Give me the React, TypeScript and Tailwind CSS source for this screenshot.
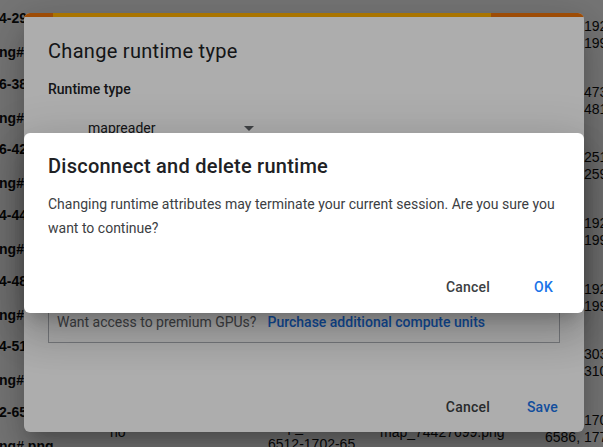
import { useState } from "react";

const rows = [
  { tail: "4-29", no: "no", id: "6512-1702-65...", map: "map_74427623.png", c1: "6512, 1920,", c2: "6586, 1994)" },
  { tail: "6-38", no: "no", id: "6512-1702-65...", map: "map_74427638.png", c1: "6512, 4733,", c2: "6586, 4810)" },
  { tail: "6-42", no: "no", id: "6512-1702-65...", map: "map_74427642.png", c1: "6512, 2517,", c2: "6586, 2591)" },
  { tail: "4-44", no: "no", id: "6512-1702-65...", map: "map_74427644.png", c1: "6512, 1920,", c2: "6586, 1994)" },
  { tail: "4-48", no: "no", id: "6512-1702-65...", map: "map_74427648.png", c1: "6512, 1920,", c2: "6586, 1994)" },
  { tail: "4-51", no: "no", id: "6512-1702-65...", map: "map_74427651.png", c1: "6512, 3033,", c2: "6586, 3107)" },
  { tail: "2-65", no: "no", id: "6512-1702-65...", map: "map_74427699.png", c1: "6512, 1702,", c2: "6586, 1776)" },
];

function Table() {
  return (
    <div className="font-['Liberation_Sans',Arial,sans-serif] text-[14px] text-[#111]">
      {rows.map((r, i) => (
        <div key={i} className="grid grid-cols-[110px_158px_112px_165px_1fr] h-[65.7px] first:mt-[1px] whitespace-nowrap">
          <div className="flex flex-col font-bold leading-[34px] overflow-hidden">
            <span className="-ml-[16.5px]">65{r.tail}_0.png</span>
            <span className="-ml-[9.5px]">png#.png</span>
          </div>
          <div className="pt-[28px] leading-[18px]">{r.no}</div>
          <div className="flex flex-col pt-[24px] leading-[17px]">
            <span>map_7442-</span>
            <span>{r.id}</span>
          </div>
          <div className="pt-[28px] leading-[18px]">{r.map}</div>
          <div className="flex flex-col pt-[17px] leading-[17px]">
            <span>{r.c1}</span>
            <span>{r.c2}</span>
          </div>
        </div>
      ))}
    </div>
  );
}

const shadow =
  "shadow-[0_11px_15px_-7px_rgba(0,0,0,0.2),0_24px_38px_3px_rgba(0,0,0,0.14),0_9px_46px_8px_rgba(0,0,0,0.12)]";

function ChangeRuntimeDialog() {
  return (
    <div className={`absolute left-[24px] top-[13px] w-[560px] h-[419px] bg-white rounded-[6px] overflow-hidden flex flex-col ${shadow}`}>
      <div className="flex h-[4px] shrink-0">
        <div className="w-[29px] bg-[#e8710a]"></div>
        <div className="flex-1 bg-[#f9ab00]"></div>
        <div className="w-[93px] bg-[#e8710a]"></div>
      </div>
      <div className="px-6 pt-[18px] flex flex-col flex-1">
        <h2 className="text-[20px] leading-[32px] text-[#202124] font-normal tracking-[0.3px]">Change runtime type</h2>
        <div className="mt-[12px] text-[14px] leading-[20px] font-medium text-[#202124]">Runtime type</div>
        <div className="mt-[19px] ml-[40px] flex items-center w-[164px] justify-between text-[14px] leading-[20px] text-[#202124]">
          <span>mapreader</span>
          <svg width="10" height="5" viewBox="0 0 10 5" className="-mr-[2px]">
            <path d="M0 0 L10 0 L5 5 Z" fill="#5f6368" />
          </svg>
        </div>
        <div className="h-[162px] overflow-hidden pt-6 text-[14px] text-[#202124]">
          <div className="font-medium">Hardware accelerator</div>
        </div>
        <div className="border border-[#b0b3b8] px-2 pt-[11px] pb-[10px] text-[14px] leading-[20px]">
          <span className="text-[#5f6368]">Want access to premium GPUs?</span>
          <span className="ml-[11px] text-[#1a73e8] font-medium">Purchase additional compute units</span>
        </div>
        <div className="mt-auto pb-[7px] flex justify-end items-center gap-[21px] -mr-[6px] text-[14px] font-medium tracking-[0.2px]">
          <button className="h-9 px-2 text-[#3c4043]">Cancel</button>
          <button className="h-9 px-2 text-[#1a73e8]">Save</button>
        </div>
      </div>
    </div>
  );
}

function DisconnectDialog() {
  return (
    <div className={`absolute left-[24px] top-[133px] w-[560px] h-[180px] bg-white rounded-[6px] flex flex-col ${shadow}`}>
      <div className="px-6 pt-[17px]">
        <h2 className="text-[20px] leading-[32px] text-[#202124] font-medium tracking-[0.25px]">Disconnect and delete runtime</h2>
        <p className="mt-[10px] text-[14px] leading-[24px] text-[#3c4043]">
          Changing runtime attributes may terminate your current session. Are you sure you want to continue?
        </p>
      </div>
      <div className="mt-auto pb-[8px] pr-[23px] flex justify-end items-center gap-[28px] text-[14px] font-medium tracking-[0.2px]">
        <button className="h-9 px-2 text-[#3c4043]">Cancel</button>
        <button className="h-9 px-2 text-[#1a73e8]">OK</button>
      </div>
    </div>
  );
}

export default function App() {
  const [open] = useState(true);
  return (
    <div className="relative w-[603px] h-[447px] overflow-hidden bg-white font-['Roboto',Arial,sans-serif]">
      <Table />
      <div className="absolute inset-0 bg-black/[0.32]"></div>
      <ChangeRuntimeDialog />
      {open && (
        <>
          <div className="absolute inset-0 bg-black/[0.32]"></div>
          <DisconnectDialog />
        </>
      )}
    </div>
  );
}
